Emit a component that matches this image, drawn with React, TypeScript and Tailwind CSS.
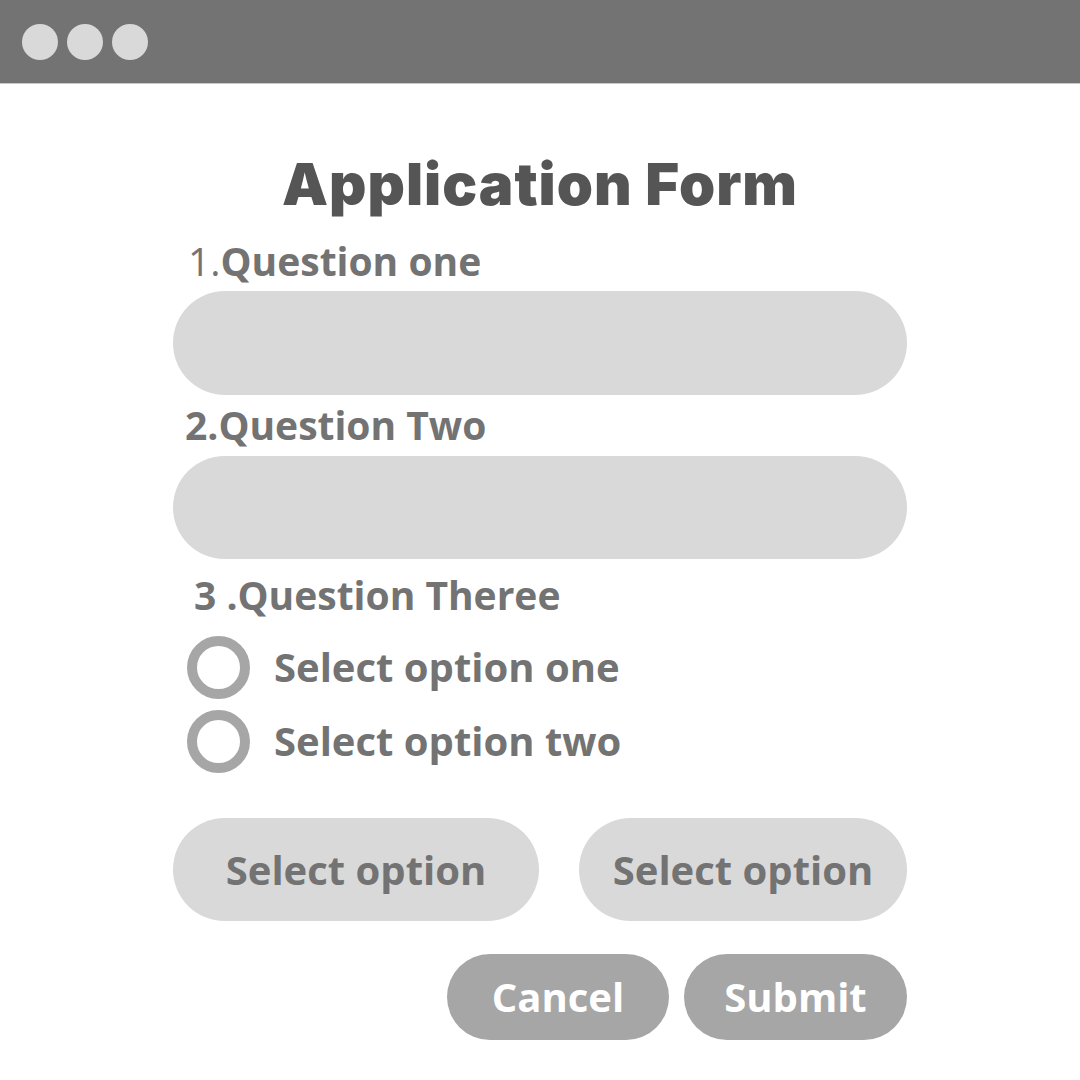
export default function App() {
  const label = "font-['Open_Sans',sans-serif] font-bold text-[#737373] leading-none";
  const Radio = ({ text }: { text: string }) => (
    <div className="flex items-center h-[64px]">
      <div className="ml-[187px] w-[63px] h-[63px] rounded-full border-[10px] border-[#a6a6a6]" />
      <span className={`${label} ml-[24px] text-[40px]`}>{text}</span>
    </div>
  );
  return (
    <div className="w-[1080px] h-[1080px] bg-white relative overflow-hidden">
      <div className="h-[84px] bg-[#737373] border-b border-[#c8c8c8] flex items-center pl-[22px] gap-[9px]">
        <div className="w-[36px] h-[36px] rounded-full bg-[#d9d9d9]" />
        <div className="w-[36px] h-[36px] rounded-full bg-[#d9d9d9]" />
        <div className="w-[36px] h-[36px] rounded-full bg-[#d9d9d9]" />
      </div>
      <div className="flex flex-col">
        <h1 className="mt-[70px] h-[60px] text-center font-['Inter',sans-serif] font-black text-[58px] leading-[60px] text-[#555555] tracking-[1px]">
          Application Form
        </h1>
        <div className={`${label} ml-[188px] mt-[26px] h-[40px] text-[39px] flex items-center`}>
          <span className="font-normal">1.</span>Question one
        </div>
        <div className="mx-[173px] mt-[11px] h-[104px] rounded-full bg-[#d9d9d9]" />
        <div className={`${label} ml-[185px] mt-[9px] h-[40px] text-[39px] flex items-center`}>2.Question Two</div>
        <div className="mx-[173px] mt-[12px] h-[103px] rounded-full bg-[#d9d9d9]" />
        <div className={`${label} ml-[194px] mt-[15px] h-[40px] text-[39px] flex items-center`}>3 .Question Theree</div>
        <div className="mt-[21px] flex flex-col gap-[10px]">
          <Radio text="Select option one" />
          <Radio text="Select option two" />
        </div>
        <div className="mt-[45px] mx-[173px] flex justify-between">
          <div className={`w-[366px] h-[103px] rounded-full bg-[#d9d9d9] flex items-center justify-center ${label} text-[40px]`}>Select option</div>
          <div className={`w-[328px] h-[103px] rounded-full bg-[#d9d9d9] flex items-center justify-center ${label} text-[40px]`}>Select option</div>
        </div>
        <div className="mt-[33px] mr-[173px] flex justify-end gap-[15px]">
          <div className="w-[222px] h-[86px] rounded-full bg-[#a6a6a6] flex items-center justify-center font-['Open_Sans',sans-serif] font-bold text-white text-[40px] leading-none">Cancel</div>
          <div className="w-[223px] h-[86px] rounded-full bg-[#a6a6a6] flex items-center justify-center font-['Open_Sans',sans-serif] font-bold text-white text-[40px] leading-none">Submit</div>
        </div>
      </div>
    </div>
  );
}
